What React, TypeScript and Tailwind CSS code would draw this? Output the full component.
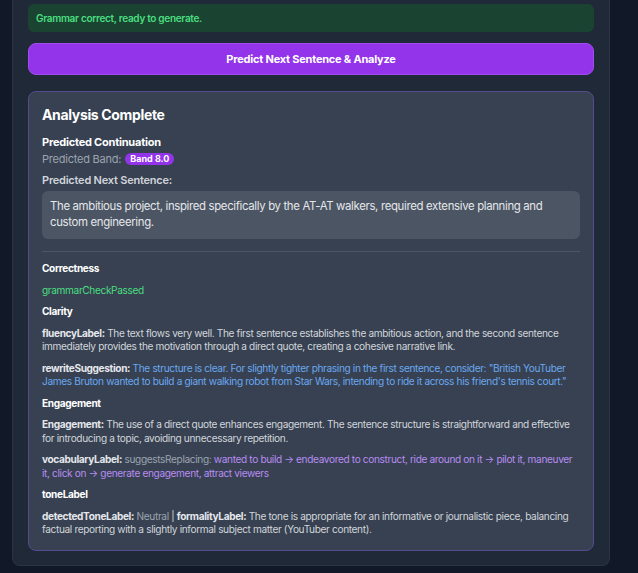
import React from 'react';

const font = { fontFamily: 'Inter, "Noto Sans", sans-serif' };

function Section({ title, children }: { title: string; children: React.ReactNode }) {
  return (
    <>
      <h4 className="font-bold text-white">{title}</h4>
      {children}
    </>
  );
}

export default function App() {
  return (
    <div className="min-h-[573px] bg-[#111827] pl-3 pr-7 pb-[9px]" style={font}>
      <div className="rounded-b-lg border border-t-0 border-[#2a3443] bg-[#1f2937] px-[15px] pt-1 pb-[14px]">
        <div className="flex h-7 items-center rounded-md bg-[#1a4331] px-2 text-[10px] font-semibold tracking-[-0.03em] text-[#4ade80]">
          Grammar correct, ready to generate.
        </div>

        <button className="mt-[11px] flex h-8 w-full items-center justify-center rounded-lg border border-[#a04df0] bg-[#9333ea] text-[11px] font-bold tracking-[-0.02em] text-white">
          Predict Next Sentence &amp; Analyze
        </button>

        <div className="mt-4 rounded-lg border border-[#564b8c] bg-[#374151] px-[13px] pt-[13px] pb-[13px]">
          <h2 className="text-[14px] leading-[20px] font-bold tracking-[-0.025em] text-white">Analysis Complete</h2>

          <h3 className="mt-[9px] text-[11px] leading-4 font-bold tracking-[-0.02em] text-white">Predicted Continuation</h3>
          <div className="mt-px flex items-center gap-1 text-[11px] leading-4 tracking-[-0.02em] text-[#9ca3af]">
            Predicted Band:
            <span className="rounded-full bg-[#9333ea] px-[5px] text-[9px] leading-3 font-bold tracking-normal text-white">
              Band 8.0
            </span>
          </div>

          <h3 className="mt-[5px] text-[11px] leading-4 font-semibold tracking-[-0.02em] text-[#d1d5db]">
            Predicted Next Sentence:
          </h3>
          <div className="mt-[3px] rounded-md bg-[#4b5563] px-2 pt-2 pb-[9px] text-[11.4px] leading-[15.6px] tracking-[-0.03em] text-[#e5e7eb]">
            The ambitious project, inspired specifically by the AT-AT walkers, required extensive planning and
            custom engineering.
          </div>

          <div className="mt-3 space-y-2 border-t border-[#4b5563] pt-[10px] text-[10.1px] leading-[13.5px] tracking-[-0.035em] text-[#d1d5db]">
            <Section title="Correctness">
              <p className="text-[#4ade80]">grammarCheckPassed</p>
            </Section>
            <Section title="Clarity">
              <p>
                <span className="font-bold text-[#e5e7eb]">fluencyLabel:</span> The text flows very well. The first
                sentence establishes the ambitious action, and the second sentence immediately provides the motivation
                through a direct quote, creating a cohesive narrative link.
              </p>
              <p>
                <span className="font-bold text-[#e5e7eb]">rewriteSuggestion:</span>{' '}
                <span className="text-[#6aa8f0]">
                  The structure is clear. For slightly tighter phrasing in the first sentence, consider: "British
                  YouTuber James Bruton wanted to build a giant walking robot from Star Wars, intending to ride it
                  across his friend's tennis court."
                </span>
              </p>
            </Section>
            <Section title="Engagement">
              <p>
                <span className="font-bold text-[#e5e7eb]">Engagement:</span> The use of a direct quote enhances
                engagement. The sentence structure is straightforward and effective for introducing a topic, avoiding
                unnecessary repetition.
              </p>
              <p>
                <span className="font-bold text-[#e5e7eb]">vocabularyLabel:</span>{' '}
                <span className="text-[#9ca3af]">suggestsReplacing:</span>{' '}
                <span className="text-[#b88cf2]">
                  wanted to build → endeavored to construct, ride around on it → pilot it, maneuver it, click on →
                  generate engagement, attract viewers
                </span>
              </p>
            </Section>
            <Section title="toneLabel">
              <p>
                <span className="font-bold text-[#e5e7eb]">detectedToneLabel:</span>{' '}
                <span className="text-[#9ca3af]">Neutral</span> | <span className="font-bold text-[#e5e7eb]">formalityLabel:</span>{' '}
                The tone is appropriate for an informative or journalistic piece, balancing factual reporting with a
                slightly informal subject matter (YouTuber content).
              </p>
            </Section>
          </div>
        </div>
      </div>
    </div>
  );
}
